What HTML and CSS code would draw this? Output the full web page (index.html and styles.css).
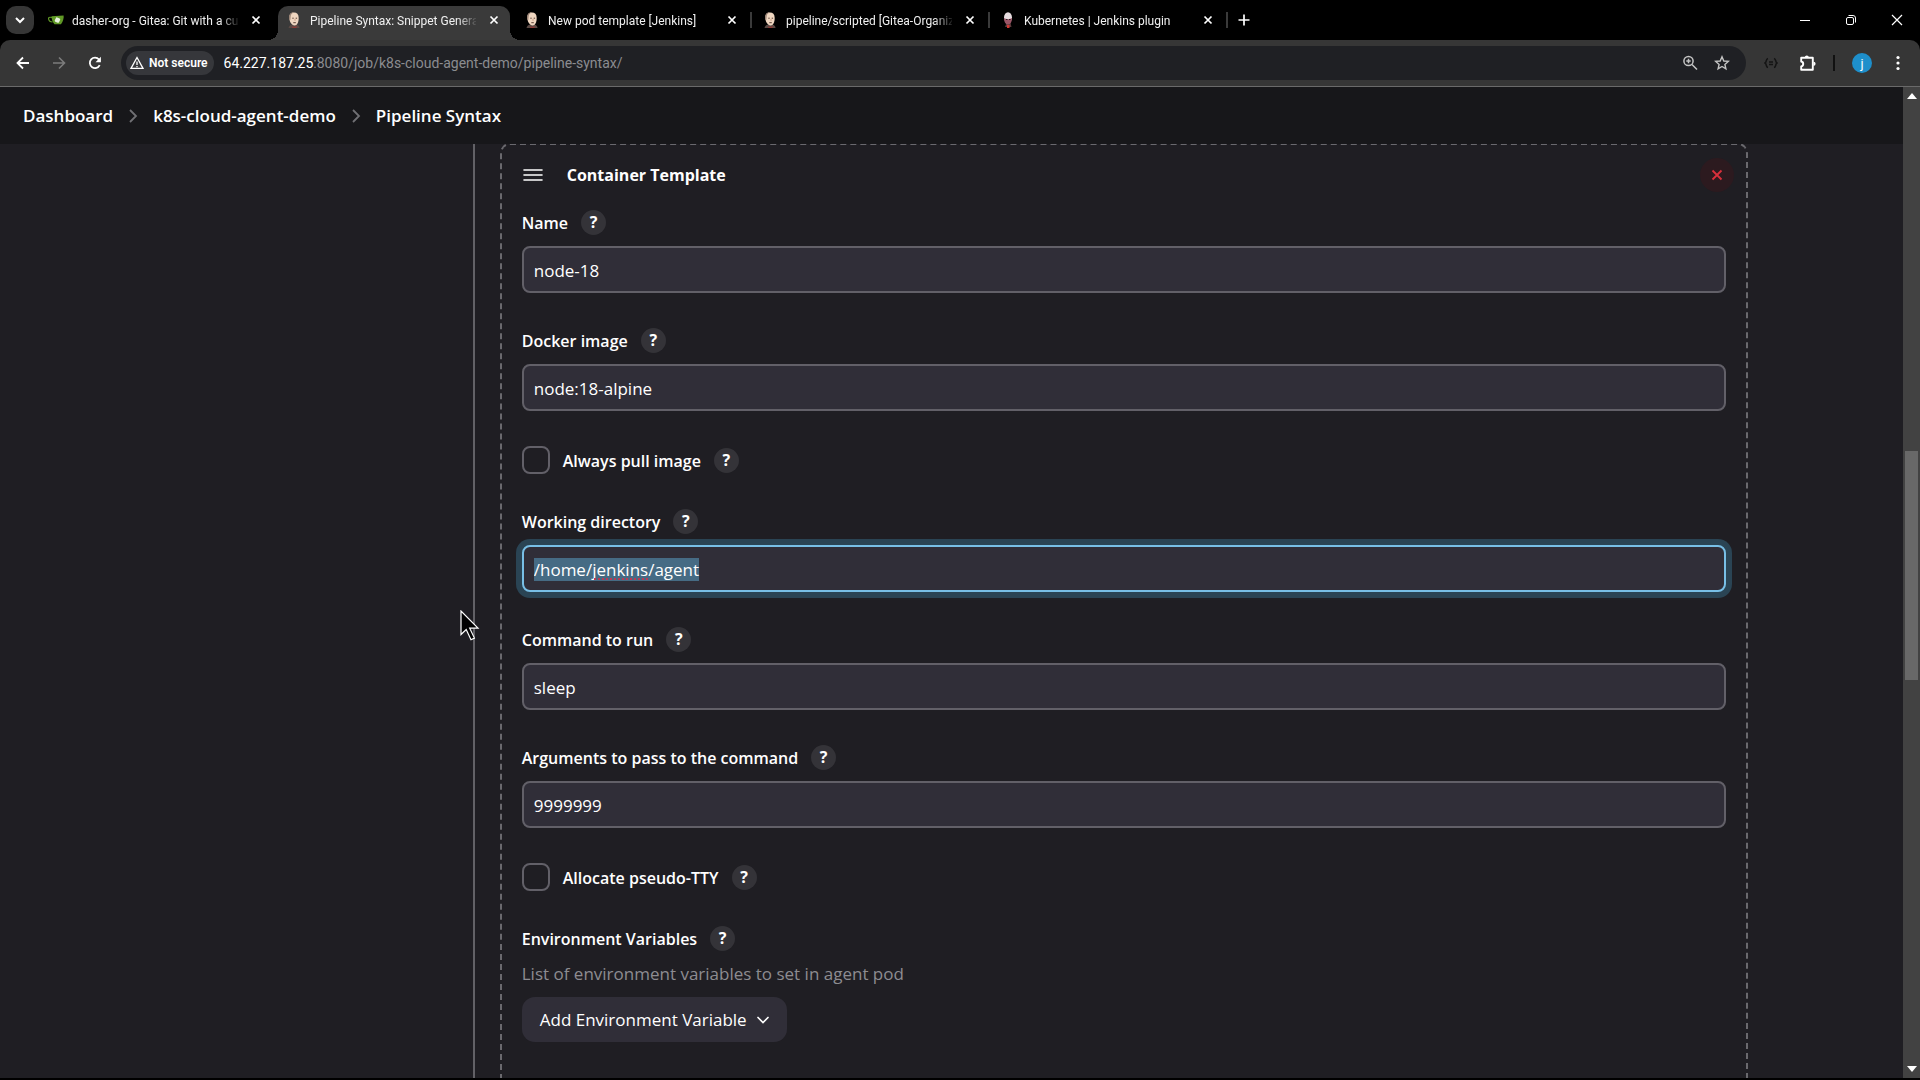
FILE: index.html
```html
<!DOCTYPE html>
<html lang="en">
<head>
<meta charset="utf-8">
<title>Pipeline Syntax: Snippet Generator</title>
<link rel="stylesheet" href="styles.css">
</head>
<body>
<svg class="defs" aria-hidden="true">
  <symbol id="jenkins" viewBox="0 0 16 16">
    <path d="M2.500 16c.4-2 1.500-2.800 3.500-3.500l5 .3c1.600.6 2.300 1.600 2.500 3.200z" fill="#5b4a45"/>
    <path d="M3.300 5.500C3.300 2 5.200.5 8 .5s4.700 1.800 4.700 5.500c0 4-1.400 7.500-4.200 7.500S3.300 9.800 3.300 5.500z" fill="#efd6c0"/>
    <path d="M3.200 7.500C2.500 3 4 .3 8 .3c-2 .8-3 2-3.300 3.700L4.300 8z" fill="#9c8577"/>
    <path d="M6.300 6.200h1.400M9.700 6.200h1.400M7.300 10.700h2.500" stroke="#5a4035" stroke-width="1" fill="none"/>
    <path d="M9 6.800v2" stroke="#c99f86" stroke-width="1" fill="none"/>
    <path d="M6.300 14.200l2 .9 2.200-1v1.900H6.300z" fill="#8e3a36"/>
  </symbol>
  <symbol id="x" viewBox="0 0 16 16"><path d="M4.500 4.500l7 7M11.500 4.500l-7 7" stroke="currentColor" stroke-width="1.700" fill="none"/></symbol>
  <symbol id="crumb" viewBox="0 0 10 16"><path d="M2 2l6 6-6 6" stroke="currentColor" stroke-width="1.800" fill="none"/></symbol>
</svg>

<header class="browser">
  <div class="tabstrip">
    <button class="tab-search" aria-label="Search tabs"><svg width="14" height="14" viewBox="0 0 14 14"><path d="M3 5l4 4 4-4" stroke="currentColor" stroke-width="2" fill="none"/></svg></button>
    <div class="tab">
      <svg class="favicon" viewBox="0 0 16 16"><path d="M4 5.500C1 4.800.4 5.500.6 7c.3 2 1.800 3 4 3" stroke="#609926" stroke-width="1.200" fill="none"/><path d="M3.500 4.200L15.600 3.500c.4 2.500-.4 5.500-2.600 8.800H6.500C4.500 10 3.500 7 3.500 4.200z" fill="#609926"/><rect x="7.200" y="5.800" width="4.600" height="4.600" rx="1" fill="#e9f2df" transform="rotate(25 9.500 8)"/></svg>
      <span class="tab-title">dasher-org - Gitea: Git with a cup of tea</span>
      <button class="tab-close" aria-label="Close tab"><svg><use href="#x"/></svg></button>
    </div>
    <span class="tab-sep off"></span>
    <div class="tab active">
      <svg class="favicon"><use href="#jenkins"/></svg>
      <span class="tab-title">Pipeline Syntax: Snippet Generator</span>
      <button class="tab-close" aria-label="Close tab"><svg><use href="#x"/></svg></button>
    </div>
    <span class="tab-sep off"></span>
    <div class="tab">
      <svg class="favicon"><use href="#jenkins"/></svg>
      <span class="tab-title">New pod template [Jenkins]</span>
      <button class="tab-close" aria-label="Close tab"><svg><use href="#x"/></svg></button>
    </div>
    <span class="tab-sep"></span>
    <div class="tab">
      <svg class="favicon"><use href="#jenkins"/></svg>
      <span class="tab-title">pipeline/scripted [Gitea-Organization]</span>
      <button class="tab-close" aria-label="Close tab"><svg><use href="#x"/></svg></button>
    </div>
    <span class="tab-sep"></span>
    <div class="tab">
      <svg class="favicon" viewBox="0 0 16 16"><path d="M5 15l1.500-4h4l1 4z" fill="#5c3a3c"/><ellipse cx="8" cy="5.500" rx="4" ry="5.200" fill="#e6dcdf"/><path d="M4 6c1.500 1.500 6.500 1.500 8 0 0 3-1.300 6.500-4 6.500S4 9 4 6z" fill="#9a5566"/><path d="M6 7.500h1.500M9 7.500h1.500" stroke="#302028"/><path d="M7 13h2.500v3H7z" fill="#d33833"/></svg>
      <span class="tab-title">Kubernetes | Jenkins plugin</span>
      <button class="tab-close" aria-label="Close tab"><svg><use href="#x"/></svg></button>
    </div>
    <span class="tab-sep"></span>
    <button class="new-tab" aria-label="New tab"><svg width="14" height="14" viewBox="0 0 14 14"><path d="M7 1.500v11M1.500 7h11" stroke="currentColor" stroke-width="1.700"/></svg></button>
    <div class="window-controls">
      <button aria-label="Minimize"><svg width="12" height="12" viewBox="0 0 12 12"><path d="M1 6.500h10" stroke="currentColor"/></svg></button>
      <button aria-label="Restore"><svg width="12" height="12" viewBox="0 0 12 12" fill="none" stroke="currentColor"><rect x="1.500" y="3.500" width="7" height="7" rx="1.500"/><path d="M3.500 1.500h4.500a2.500 2.500 0 0 1 2.500 2.500v4.500"/></svg></button>
      <button aria-label="Close"><svg width="12" height="12" viewBox="0 0 12 12"><path d="M1 1l10 10M11 1L1 11" stroke="currentColor" stroke-width="1.200"/></svg></button>
    </div>
  </div>

  <div class="toolbar">
    <div class="nav">
      <button aria-label="Back"><svg width="14" height="14" viewBox="0 0 14 14"><path d="M13 7H2M7 1.500L1.500 7 7 12.500" stroke="currentColor" stroke-width="1.800" fill="none"/></svg></button>
      <button aria-label="Forward" disabled><svg width="14" height="14" viewBox="0 0 14 14"><path d="M1 7h11M7 1.500L12.500 7 7 12.500" stroke="currentColor" stroke-width="1.600" fill="none"/></svg></button>
      <button aria-label="Reload"><svg width="14" height="14" viewBox="0 0 14 14"><path d="M11.700 9.200A5.200 5.200 0 1 1 11 3.500l1 1.200" stroke="currentColor" stroke-width="1.800" fill="none"/><path d="M12.900.8v5.400H7.500z" fill="currentColor"/></svg></button>
    </div>
    <div class="omnibox">
      <button class="security"><svg width="14" height="14" viewBox="0 0 14 14" fill="none" stroke="currentColor" stroke-width="1.300"><path d="M7 1.500L13 12.400H1z"/><path d="M7 5.500v3.500M7 10v1.300"/></svg>Not secure</button>
      <span class="url">64.227.187.25<span class="path">:8080/job/k8s-cloud-agent-demo/pipeline-syntax/</span></span>
      <button class="omni-icon" aria-label="Zoom"><svg width="16" height="16" viewBox="0 0 16 16" fill="none" stroke="currentColor" stroke-width="1.500"><circle cx="6.500" cy="6" r="4.600"/><path d="M10 9.500l5 5M6.500 3.800v4.400M4.300 6h4.400"/></svg></button>
      <button class="omni-icon" aria-label="Bookmark"><svg width="16" height="16" viewBox="0 0 16 16" fill="none" stroke="currentColor" stroke-width="1.400"><path d="M8 1.800l1.800 4.200 4.500.4-3.400 3 1 4.500L8 11.500l-3.900 2.400 1-4.500-3.400-3L6.200 6z"/></svg></button>
    </div>
    <div class="extensions">
      <button class="ext-dim" aria-label="Extension"><svg width="14" height="12" viewBox="0 0 14 12" fill="none" stroke="currentColor" stroke-width="1.500"><path d="M4 1.500C1.500 2 3 5 1 6c2 1 .5 4 3 4.500M10 1.500c2.500.5 1 3.500 3 4.500-2 1-.5 4-3 4.500M5 5h4M5 7.500h4"/></svg></button>
      <button aria-label="Extensions"><svg width="18" height="18" viewBox="0 0 18 18"><path d="M2.200 3.800h11.600v11.900H2.200v-3.300c2.700-.5 2.700-4.400 0-4.900z" fill="none" stroke="currentColor" stroke-width="1.900" stroke-linejoin="round"/><path d="M5.800 3.500a2 2 0 0 1 4 0zM14.500 7.700a2.100 2.100 0 0 1 0 4.200z" fill="currentColor"/></svg></button>
      <span class="bar"></span>
      <button class="avatar">j</button>
      <button aria-label="Menu"><svg width="4" height="16" viewBox="0 0 4 16" fill="currentColor"><circle cx="2" cy="2.500" r="1.600"/><circle cx="2" cy="8" r="1.600"/><circle cx="2" cy="13.500" r="1.600"/></svg></button>
    </div>
  </div>
</header>

<div class="viewport">
  <div class="page">
    <nav class="breadcrumbs">
      <a href="#">Dashboard</a>
      <svg width="10" height="16"><use href="#crumb"/></svg>
      <a href="#">k8s-cloud-agent-demo</a>
      <svg width="10" height="16"><use href="#crumb"/></svg>
      <a href="#">Pipeline Syntax</a>
    </nav>
    <div class="columns">
      <aside class="side"></aside>
      <main class="main">
        <section class="chunk">
          <div class="chunk-head">
            <svg width="20" height="20" viewBox="0 0 20 20"><path d="M1 5h18M1 10h18M1 15h18" stroke="#fff" stroke-width="1.600" stroke-linecap="round"/></svg>
            <h2>Container Template</h2>
            <button class="remove" aria-label="Delete"><svg width="12" height="12" viewBox="0 0 12 12"><path d="M1.500 1.500l9 9M10.500 1.500l-9 9" stroke="currentColor" stroke-width="1.800"/></svg></button>
          </div>
          <form class="fields">
            <div class="field">
              <div class="label-row"><label for="name">Name</label><button type="button" class="help">?</button></div>
              <input class="text" id="name" type="text" value="node-18" spellcheck="false">
            </div>
            <div class="field">
              <div class="label-row"><label for="image">Docker image</label><button type="button" class="help">?</button></div>
              <input class="text" id="image" type="text" value="node:18-alpine" spellcheck="false">
            </div>
            <div class="check-row"><input class="check" id="pull" type="checkbox"><label for="pull">Always pull image</label><button type="button" class="help">?</button></div>
            <div class="field">
              <div class="label-row"><label for="dir">Working directory</label><button type="button" class="help">?</button></div>
              <div class="spell">
                <input class="text" id="dir" type="text" value="/home/jenkins/agent" spellcheck="false">
                <span class="squiggle"></span>
              </div>
            </div>
            <div class="field">
              <div class="label-row"><label for="cmd">Command to run</label><button type="button" class="help">?</button></div>
              <input class="text" id="cmd" type="text" value="sleep" spellcheck="false">
            </div>
            <div class="field">
              <div class="label-row"><label for="args">Arguments to pass to the command</label><button type="button" class="help">?</button></div>
              <input class="text" id="args" type="text" value="9999999" spellcheck="false">
            </div>
            <div class="check-row"><input class="check" id="tty" type="checkbox"><label for="tty">Allocate pseudo-TTY</label><button type="button" class="help">?</button></div>
            <div class="env">
              <div class="label-row"><span class="label">Environment Variables</span><button type="button" class="help">?</button></div>
              <p>List of environment variables to set in agent pod</p>
              <button type="button" class="add">Add Environment Variable<svg width="12" height="12" viewBox="0 0 12 12"><path d="M1 3.500l5 5 5-5" stroke="currentColor" stroke-width="1.700" fill="none" stroke-linecap="round"/></svg></button>
            </div>
          </form>
        </section>
      </main>
    </div>
  </div>
  <div class="scrollbar">
    <svg width="10" height="6" viewBox="0 0 10 6"><path d="M5 0l5 6H0z" fill="#fff"/></svg>
    <div class="track"><div class="thumb"></div></div>
    <svg width="10" height="6" viewBox="0 0 10 6"><path d="M5 6l5-6H0z" fill="#fff"/></svg>
  </div>
</div>

<svg class="cursor" width="20" height="32" viewBox="0 0 20 32"><path d="M1 1v23.500l5.200-5 4.800 10.200 3.400-1.600-4.700-9.900H18z" fill="#000" stroke="#fff" stroke-width="1.200"/></svg>
<script src="focus.js"></script>
</body>
</html>
```
FILE: styles.css
```css
* { box-sizing: border-box; }

body {
  margin: 0;
  height: 100vh;
  display: flex;
  flex-direction: column;
  overflow: hidden;
  background: #000;
  color: #fff;
  font: 17px/23px "Open Sans", "Noto Sans", sans-serif;
}

button {
  border: 0;
  padding: 0;
  background: none;
  color: inherit;
  font: inherit;
  display: flex;
  align-items: center;
  justify-content: center;
}

.defs { position: absolute; width: 0; height: 0; }

/* Browser frame */
.browser { flex: none; font-family: Roboto, sans-serif; }

.tabstrip { display: flex; height: 40px; padding: 6px 0 0 6px; background: #000; }

.tab-search { width: 28px; height: 28px; margin-right: 6px; border-radius: 10px; background: #363636; }

.tab {
  position: relative;
  display: flex;
  align-items: center;
  width: 232px;
  height: 34px;
  padding: 0 8px 6px;
  font-size: 12px;
  line-height: 16px;
}

.tab.active { background: #3a3a3a; border-radius: 10px 10px 0 0; }
.tab.active::before,
.tab.active::after {
  content: "";
  position: absolute;
  bottom: 0;
  width: 10px;
  height: 10px;
}
.tab.active::before { right: 100%; background: radial-gradient(circle at 0 0, #000 10px, #3a3a3a 10px); }
.tab.active::after { left: 100%; background: radial-gradient(circle at 100% 0, #000 10px, #3a3a3a 10px); }

.favicon { width: 16px; height: 16px; flex: none; margin-right: 8px; }

.tab-title {
  flex: 1;
  overflow: hidden;
  padding-top: 1px;
  white-space: nowrap;
  color: #f0f0f0;
  mask-image: linear-gradient(to right, #000 148px, transparent 168px);
}

.tab-close { width: 16px; height: 16px; margin-left: 10px; }
.tab-close svg { width: 16px; height: 16px; }

.tab-sep { width: 2px; height: 16px; margin: 6px 2px 0; background: #3a3a3a; }
.tab-sep.off { background: none; }

.new-tab { width: 28px; height: 28px; }

.window-controls { display: flex; margin-left: auto; height: 28px; }
.window-controls button { width: 46px; }

.toolbar {
  display: flex;
  align-items: center;
  height: 47px;
  padding: 0 5px;
  background: #363636;
  border-bottom: 1px solid #6a6a6a;
  border-radius: 10px 10px 0 0;
}

.nav { display: flex; width: 116px; }
.nav button { width: 36px; height: 32px; }
.nav button:disabled { color: #7c7c7c; }

.omnibox {
  flex: 1;
  display: flex;
  align-items: center;
  height: 34px;
  padding: 0 8px 0 5px;
  border-radius: 17px;
  background: #1f2024;
}

.security {
  height: 24px;
  padding: 0 6px 0 4px;
  gap: 5px;
  border-radius: 12px;
  background: #36373b;
  font-size: 12px;
  font-weight: 600;
}

.url { flex: 1; margin-left: 10px; font-size: 14px; white-space: nowrap; }
.url .path { color: #8b8c90; }

.omni-icon { width: 32px; height: 28px; color: #c4c4c4; }

.extensions { display: flex; align-items: center; margin-left: 10px; }
.extensions button { width: 34px; height: 30px; }
.extensions .ext-dim { width: 30px; margin-right: 5px; color: #141414; }
.bar { width: 2px; height: 16px; margin: 0 8px; background: #111; }
.extensions .avatar {
  width: 20px;
  height: 20px;
  margin: 0 9px;
  border-radius: 50%;
  background: #1e8fcb;
  font-size: 13px;
}

/* Page */
.viewport { flex: 1; display: flex; min-height: 0; margin-bottom: 2px; }

.page { flex: 1; min-width: 0; display: flex; flex-direction: column; background: #1f1e23; }

.breadcrumbs {
  display: flex;
  align-items: center;
  gap: 15px;
  height: 57px;
  flex: none;
  padding: 0 23px;
  background: #17171a;
  font-weight: 600;
}
.breadcrumbs a { color: #fff; text-decoration: none; }
.breadcrumbs svg { color: #707074; }

.columns { flex: 1; display: flex; min-height: 0; overflow: hidden; }
.side { width: calc(25% - 1px); border-right: 2px solid #626166; }
.main { flex: 1; padding: 0 155px 0 25px; }

.chunk {
  margin-top: -1px;
  padding: 13px 20px 60px;
  border: 2px dashed #6a696e;
  border-radius: 10px;
}

.chunk-head {
  display: flex;
  align-items: center;
  height: 34px;
  margin: 0 -8px 18px 1px;
}
.chunk-head h2 { margin: 0 auto 0 24px; font-size: 16px; font-weight: 700; }

.remove { width: 34px; height: 34px; border-radius: 50%; background: #2c1a1f; color: #d8303c; }

.fields { display: flex; flex-direction: column; gap: 35px; }

.field { display: flex; flex-direction: column; gap: 11px; }

.label-row,
.check-row { display: flex; align-items: center; gap: 13px; font-size: 16px; font-weight: 600; }
.label-row { height: 25px; }
.check-row { height: 28px; }
.label-row label,
.label-row .label,
.check-row label { padding-top: 2px; }

.help {
  width: 25px;
  height: 25px;
  border-radius: 50%;
  background: #343338;
  font-size: 16px;
  font-weight: 700;
}

.text {
  width: 100%;
  height: 47px;
  padding: 1px 10px 0;
  border: 2px solid #626068;
  border-radius: 8px;
  background: #302e38;
  color: #fff;
  font: inherit;
  outline: none;
}
.text:focus { border-color: #78bfe6; box-shadow: 0 0 0 6px #2a4454; }
.text::selection { background: #466b84; color: #fff; }

.spell { position: relative; display: flex; }
.squiggle {
  position: absolute;
  left: 72px;
  top: 33px;
  width: 54px;
  border-bottom: 2px dotted #b83a55;
}

.check {
  appearance: none;
  width: 28px;
  height: 28px;
  margin: 0;
  border: 2px solid #626068;
  border-radius: 8px;
}

.env p { margin: 11px 0 12px; color: #8d8c91; }

.add {
  height: 45px;
  padding: 0 18px;
  gap: 10px;
  border-radius: 13px;
  background: #302e38;
}

/* Scrollbar */
.scrollbar {
  width: 17px;
  display: flex;
  flex-direction: column;
  align-items: center;
  padding: 6px 0;
  background: #424242;
}
.track { flex: 1; width: 13px; margin: 8px 0; display: flex; flex-direction: column; }
.track::before { content: ""; flex: 344; }
.track::after { content: ""; flex: 378; }
.thumb { flex: 229; background: #686868; }

.cursor { position: absolute; left: 460px; top: 610px; }
```
FILE: focus.js
```js
const dir = document.getElementById('dir');
dir.focus({ preventScroll: true });
dir.select();
```
